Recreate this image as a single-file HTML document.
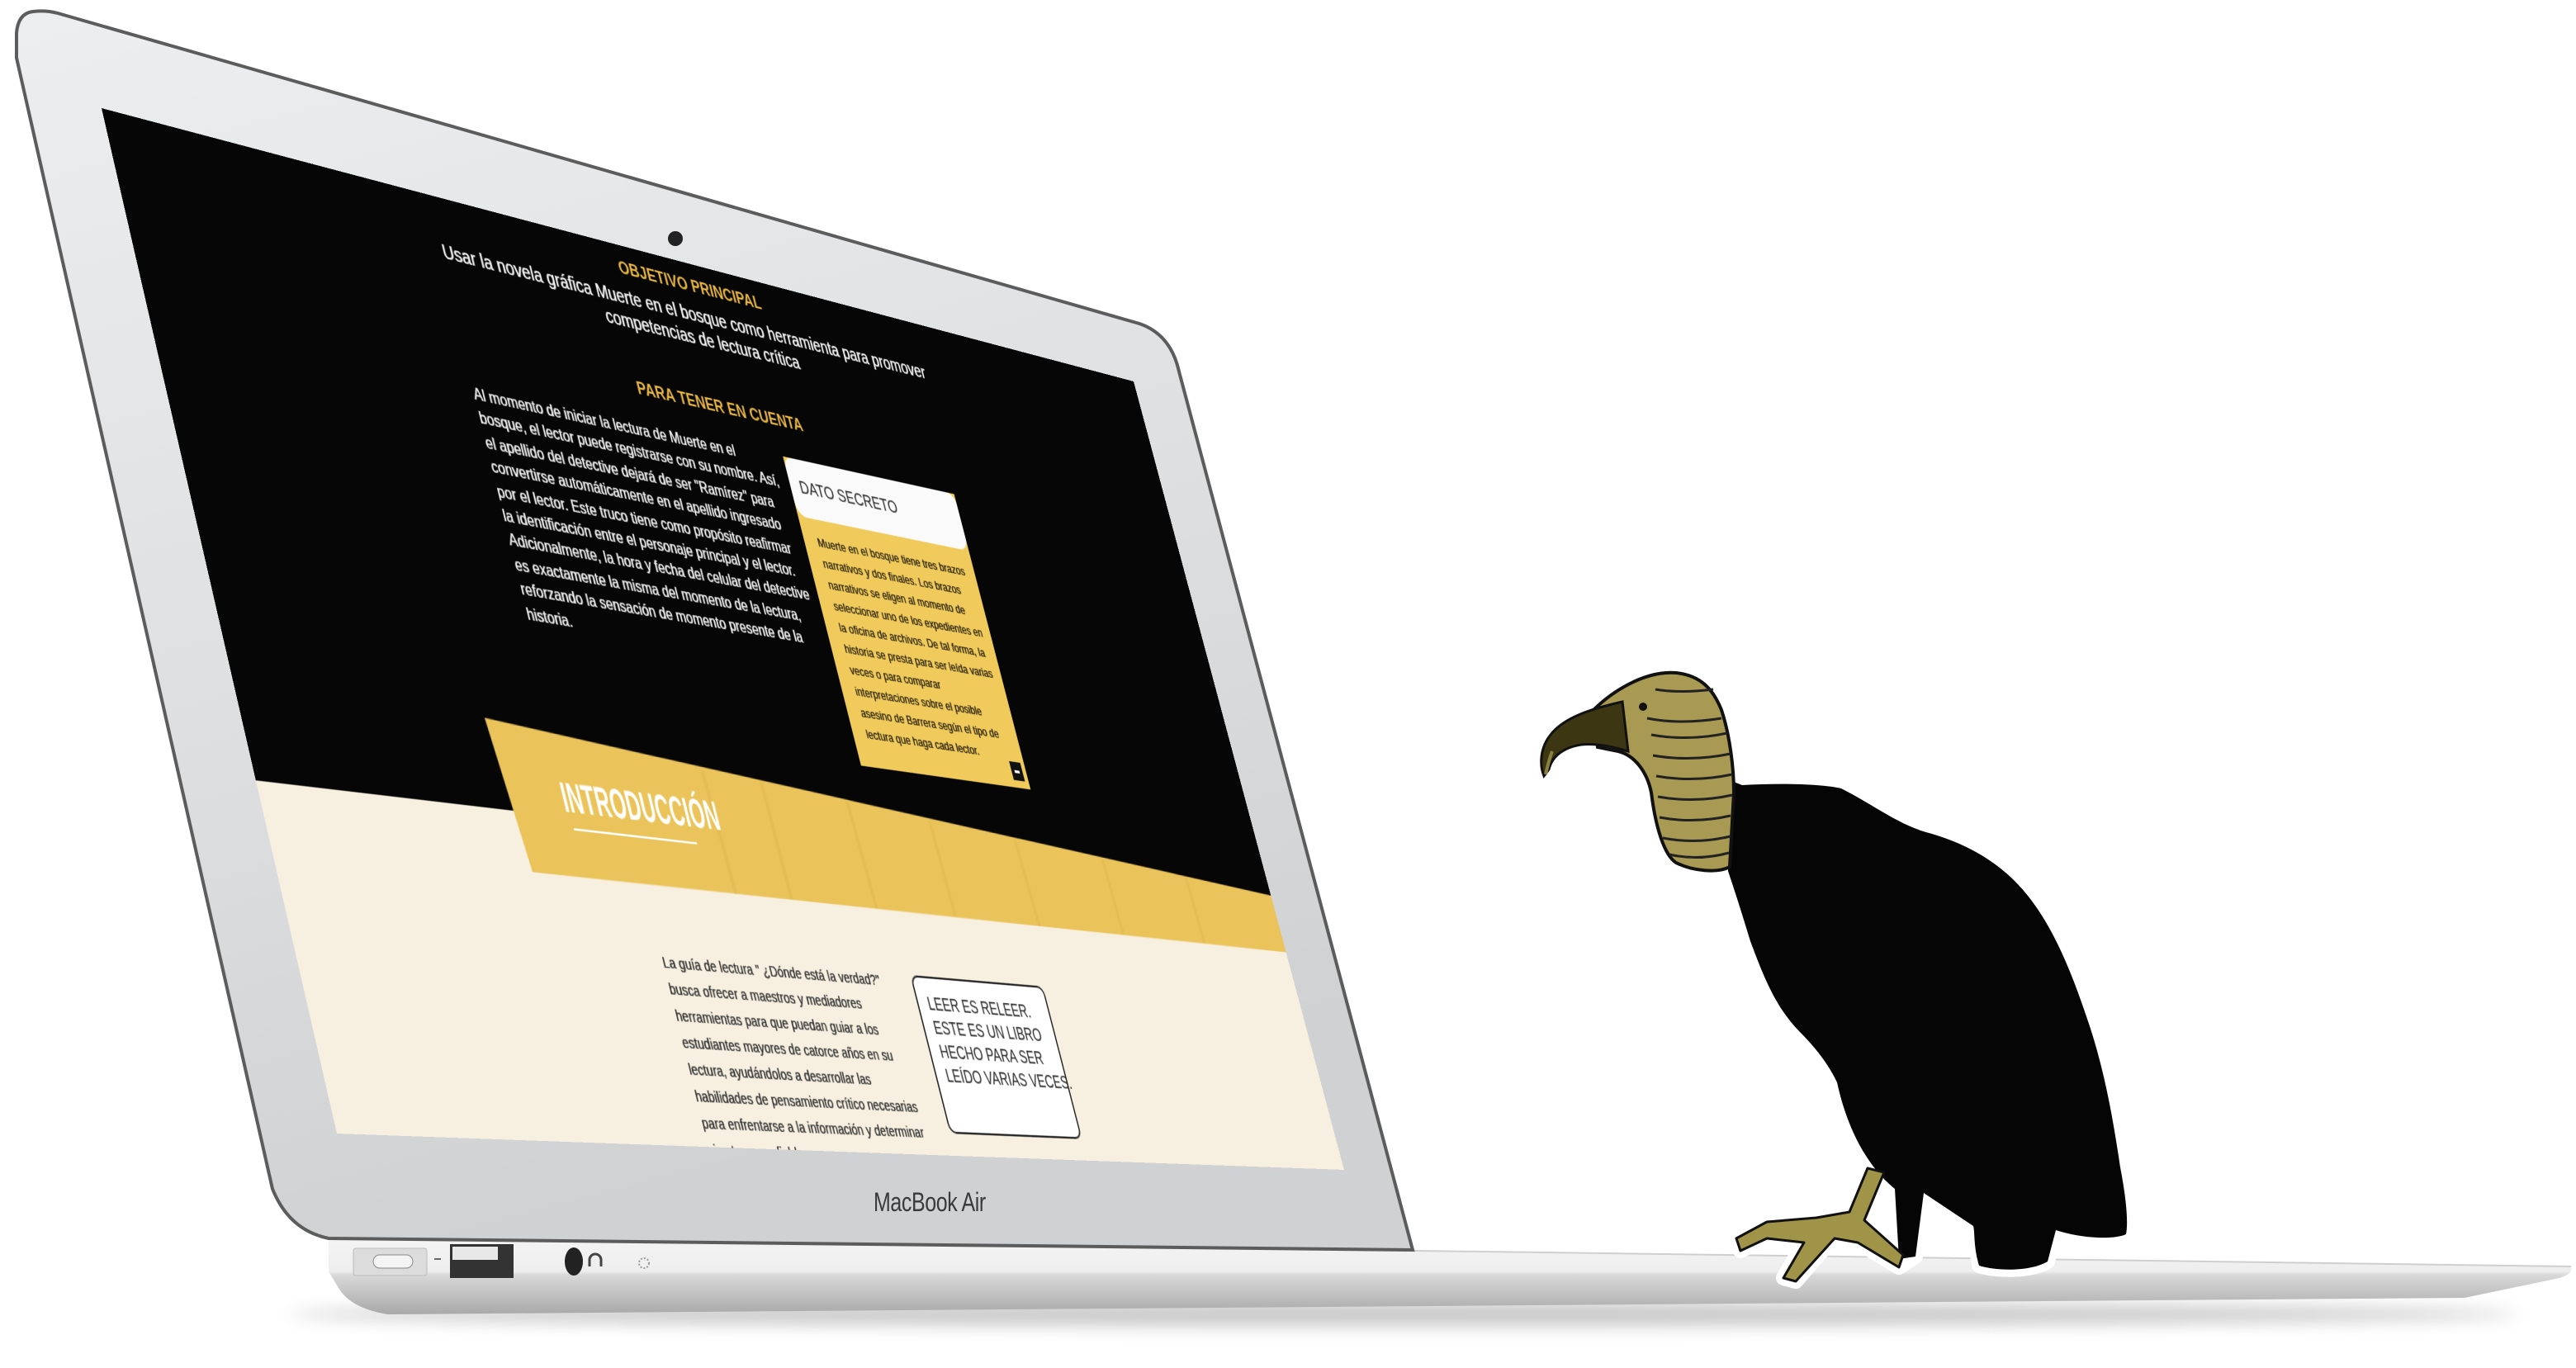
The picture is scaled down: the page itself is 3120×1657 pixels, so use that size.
<!DOCTYPE html>
<html><head><meta charset="utf-8">
<style>
html,body{margin:0;padding:0;background:#fff;}
body{width:3120px;height:1657px;position:relative;overflow:hidden;font-family:"Liberation Sans Narrow","Liberation Sans",sans-serif;}
#bg{position:absolute;left:0;top:0;}
#page{position:absolute;left:0;top:0;width:1440px;height:900px;overflow:hidden;background:#060606;
transform-origin:0 0;
transform:matrix3d(1.15629,0.326847,0,0.00020993, 0.29917,1.32112,0,-0.000042884, 0,0,1,0, 123,131,0,1);}
.c{position:absolute;left:0;width:1440px;text-align:center;white-space:nowrap;}
.y{color:#eab844;font-size:19px;font-weight:bold;}
.w{color:#f2f2f2;font-size:20px;line-height:25px;text-shadow:0.6px 0 0 #f2f2f2;}
#left{position:absolute;left:374px;top:184px;color:#f0f0f0;font-size:16.5px;line-height:23.4px;white-space:nowrap;text-shadow:0.6px 0 0 #f0f0f0;}
#dato{position:absolute;left:795px;top:189px;width:263px;height:319px;background:#f0cb5c;}
#dato .hd{background:#fafafa;height:62px;border-radius:12px 12px 14px 14px;box-sizing:border-box;padding:20px 0 0 14px;font-size:19px;color:#222;}
#dato .bd{padding:14px 0 0 20px;font-size:13.5px;line-height:22px;color:#2a2210;white-space:nowrap;text-shadow:0.3px 0 0 #2a2210;}
#dato .mn{position:absolute;right:6px;bottom:8px;width:18px;height:20px;background:#111;}
#dato .mn:after{content:"";position:absolute;left:5px;top:9px;width:8px;height:3px;background:#fff;}
#cream{position:absolute;left:0;top:598px;width:1440px;height:302px;background:#f7f0e1;}
#intro{position:absolute;left:362px;top:558px;font-size:40px;font-weight:bold;color:#fff;letter-spacing:0px;transform:scaleX(0.66);transform-origin:0 0;white-space:nowrap;}
#uline{position:absolute;left:368px;top:608px;width:160px;height:2px;background:#fff;}
#ip{position:absolute;left:442px;top:716px;color:#333;font-size:15px;line-height:25px;white-space:nowrap;text-shadow:0.3px 0 0 #333;}
#leer{position:absolute;left:789px;top:720px;width:205px;height:158px;background:#fff;border:2px solid #222;border-radius:10px;box-sizing:border-box;padding:14px 0 0 14px;font-size:18px;line-height:24px;color:#222;white-space:nowrap;}
#mac{position:absolute;left:1058px;top:1438px;font-size:32px;color:#3a3a3a;transform:scaleX(0.78);transform-origin:0 0;letter-spacing:-0.5px;}
</style></head><body>
<svg id="bg" width="3120" height="1657" viewBox="0 0 3120 1657">
<defs>
<linearGradient id="lid" x1="0" y1="0" x2="0.3" y2="1">
<stop offset="0" stop-color="#eceef0"/><stop offset="0.6" stop-color="#dcdee0"/><stop offset="1" stop-color="#cfd1d3"/></linearGradient>
<linearGradient id="base" x1="0" y1="0" x2="0" y2="1">
<stop offset="0" stop-color="#f4f4f4"/><stop offset="0.45" stop-color="#eeeeee"/><stop offset="0.5" stop-color="#d8d8d8"/><stop offset="1" stop-color="#a9a9a9"/></linearGradient>
<filter id="bl" x="-10%" y="-200%" width="120%" height="500%"><feGaussianBlur stdDeviation="10"/></filter>
</defs>
<ellipse cx="1700" cy="1592" rx="1350" ry="14" fill="#000" opacity="0.22" filter="url(#bl)"/>
<path d="M398,1497 L3114,1534 Q3118,1542 3100,1548 L2985,1572 L470,1592 Q425,1585 410,1560 L398,1540 Z" fill="url(#base)"/>
<path d="M398,1497 L3114,1534" stroke="#cfcfcf" stroke-width="2"/>
<path d="M40,14 Q22,16 20,40 L20,70 L330,1440 Q350,1490 398,1500 L1711,1514 L1428,450 Q1418,405 1380,392 L70,16 Q55,12 40,14 Z" fill="url(#lid)" stroke="#5c5c5c" stroke-width="4"/>
<circle cx="818" cy="289" r="9" fill="#222"/>
<rect x="428" y="1512" width="89" height="33" rx="3" fill="#dcdcdc" stroke="#bbb"/>
<rect x="452" y="1520" width="48" height="16" rx="8" fill="#f4f4f4" stroke="#888"/>
<rect x="526" y="1524" width="8" height="2" fill="#666"/>
<rect x="545" y="1507" width="77" height="41" fill="#333"/>
<rect x="548" y="1510" width="55" height="16" fill="#e8e8e8"/>
<ellipse cx="695" cy="1528" rx="11" ry="17" fill="#222"/>
<path d="M714,1534 v-8 a7,7 0 0 1 14,0 v8" fill="none" stroke="#444" stroke-width="3"/>
<circle cx="780" cy="1530" r="6" fill="none" stroke="#999" stroke-width="2" stroke-dasharray="2 2"/>
<g stroke="#fff" stroke-width="18" stroke-linejoin="round" fill="#fff">
<path d="M2095,945 L2230,955 C2270,975 2300,1000 2340,1010 C2390,1025 2430,1050 2460,1090 C2490,1130 2510,1180 2530,1240 C2550,1300 2560,1360 2568,1414 C2575,1450 2578,1480 2575,1495 C2560,1502 2520,1500 2490,1490 L2480,1528 C2460,1540 2420,1540 2397,1533 L2390,1485 L2330,1445 L2320,1522 L2300,1535 L2250,1505 L2220,1500 L2175,1552 L2160,1548 L2185,1505 L2140,1500 L2108,1515 L2103,1500 L2140,1480 L2200,1475 L2240,1470 L2262,1415 C2240,1380 2232,1340 2225,1311 C2200,1270 2150,1220 2120,1140 L2093,1055 Z"/>
</g>
<path d="M2095,945 L2110,951 C2160,948 2210,950 2230,955 C2270,975 2300,1000 2340,1010 C2390,1025 2430,1050 2460,1090 C2490,1130 2510,1180 2530,1240 C2550,1300 2560,1360 2568,1414 C2575,1450 2578,1480 2575,1495 C2560,1502 2520,1500 2490,1490 L2480,1528 C2460,1540 2420,1540 2397,1533 C2390,1510 2392,1490 2390,1485 L2330,1445 L2320,1522 L2300,1525 L2295,1440 C2270,1420 2240,1380 2225,1311 C2215,1290 2200,1270 2180,1250 C2150,1220 2135,1180 2120,1140 C2108,1100 2098,1070 2093,1055 Z" fill="#050505"/>
<path d="M2262,1415 L2282,1420 L2258,1478 L2305,1520 L2300,1535 L2250,1505 L2222,1500 L2175,1552 L2160,1548 L2185,1505 L2140,1500 L2108,1515 L2103,1500 L2140,1480 L2200,1475 L2240,1468 Z" fill="#a09448" stroke="#111" stroke-width="3" stroke-linejoin="round"/>
<path d="M1930,860 C1950,840 1990,812 2030,815 C2060,818 2075,835 2085,860 C2095,890 2100,930 2100,960 L2095,1050 C2080,1058 2050,1055 2030,1045 C2015,1035 2005,1000 2000,960 C1995,935 1980,915 1960,910 L1935,905 Z" fill="#a89a52" stroke="#111" stroke-width="4"/>
<path d="M1965,850 C1930,858 1895,868 1878,890 C1866,905 1864,925 1870,940 L1876,932 C1880,915 1895,905 1915,902 C1935,900 1955,905 1972,910 Z" fill="#3c3712" stroke="#111" stroke-width="3"/>
<path d="M1880,910 C1876,920 1874,930 1872,938" stroke="#8a8040" stroke-width="4" fill="none"/>
<circle cx="1990" cy="856" r="5" fill="#111"/>
<g stroke="#222" stroke-width="3" fill="none">
<path d="M2005,835 q30,5 70,0"/><path d="M1995,870 q40,8 90,0"/><path d="M2000,890 q45,8 92,-2"/>
<path d="M2002,915 q45,8 94,-2"/><path d="M2006,940 q45,8 92,-2"/><path d="M2008,965 q45,8 90,-2"/>
<path d="M2010,990 q42,8 86,-2"/><path d="M2014,1015 q40,8 82,-2"/><path d="M2022,1035 q35,8 72,-2"/>
</g>
</svg>
<div id="mac">MacBook Air</div>
<div id="page">
<div id="cream"></div>
<svg style="position:absolute;left:0;top:0" width="1440" height="900">
<polygon points="288,513 1440,593 1440,657 302,654" fill="#eac35a"/>
<g stroke="#ddb44e" stroke-width="5" opacity="0.35">
<line x1="560" y1="535" x2="565" y2="655"/><line x1="640" y1="540" x2="642" y2="655"/><line x1="760" y1="548" x2="764" y2="655"/>
<line x1="880" y1="556" x2="882" y2="655"/><line x1="1010" y1="565" x2="1014" y2="656"/><line x1="1150" y1="575" x2="1152" y2="656"/><line x1="1290" y1="584" x2="1292" y2="656"/>
</g>
</svg>
<div class="c y" style="top:14px">OBJETIVO PRINCIPAL</div>
<div class="c w" style="top:44px">Usar la novela gráfica Muerte en el bosque como herramienta para promover<br>competencias de lectura crítica</div>
<div class="c y" style="top:140px">PARA TENER EN CUENTA</div>
<div id="left">Al momento de iniciar la lectura de Muerte en el<br>bosque, el lector puede registrarse con su nombre. Así,<br>el apellido del detective dejará de ser "Ramírez" para<br>convertirse automáticamente en el apellido ingresado<br>por el lector. Este truco tiene como propósito reafirmar<br>la identificación entre el personaje principal y el lector.<br>Adicionalmente, la hora y fecha del celular del detective<br>es exactamente la misma del momento de la lectura,<br>reforzando la sensación de momento presente de la<br>historia.</div>
<div id="dato"><div class="hd">DATO SECRETO</div>
<div class="bd">Muerte en el bosque tiene tres brazos<br>narrativos y dos finales. Los brazos<br>narrativos se eligen al momento de<br>seleccionar uno de los expedientes en<br>la oficina de archivos. De tal forma, la<br>historia se presta para ser leída varias<br>veces o para comparar<br>interpretaciones sobre el posible<br>asesino de Barrera según el tipo de<br>lectura que haga cada lector.</div>
<div class="mn"></div></div>
<div id="intro">INTRODUCCIÓN</div>
<div id="uline"></div>
<div id="ip">La guía de lectura " ¿Dónde está la verdad?"<br>busca ofrecer a maestros y mediadores<br>herramientas para que puedan guiar a los<br>estudiantes mayores de catorce años en su<br>lectura, ayudándolos a desarrollar las<br>habilidades de pensamiento crítico necesarias<br>para enfrentarse a la información y determinar<br>si esta es confiable o no.</div>
<div id="leer">LEER ES RELEER.<br>ESTE ES UN LIBRO<br>HECHO PARA SER<br>LEÍDO VARIAS VECES.</div>
</div>
</body></html>
